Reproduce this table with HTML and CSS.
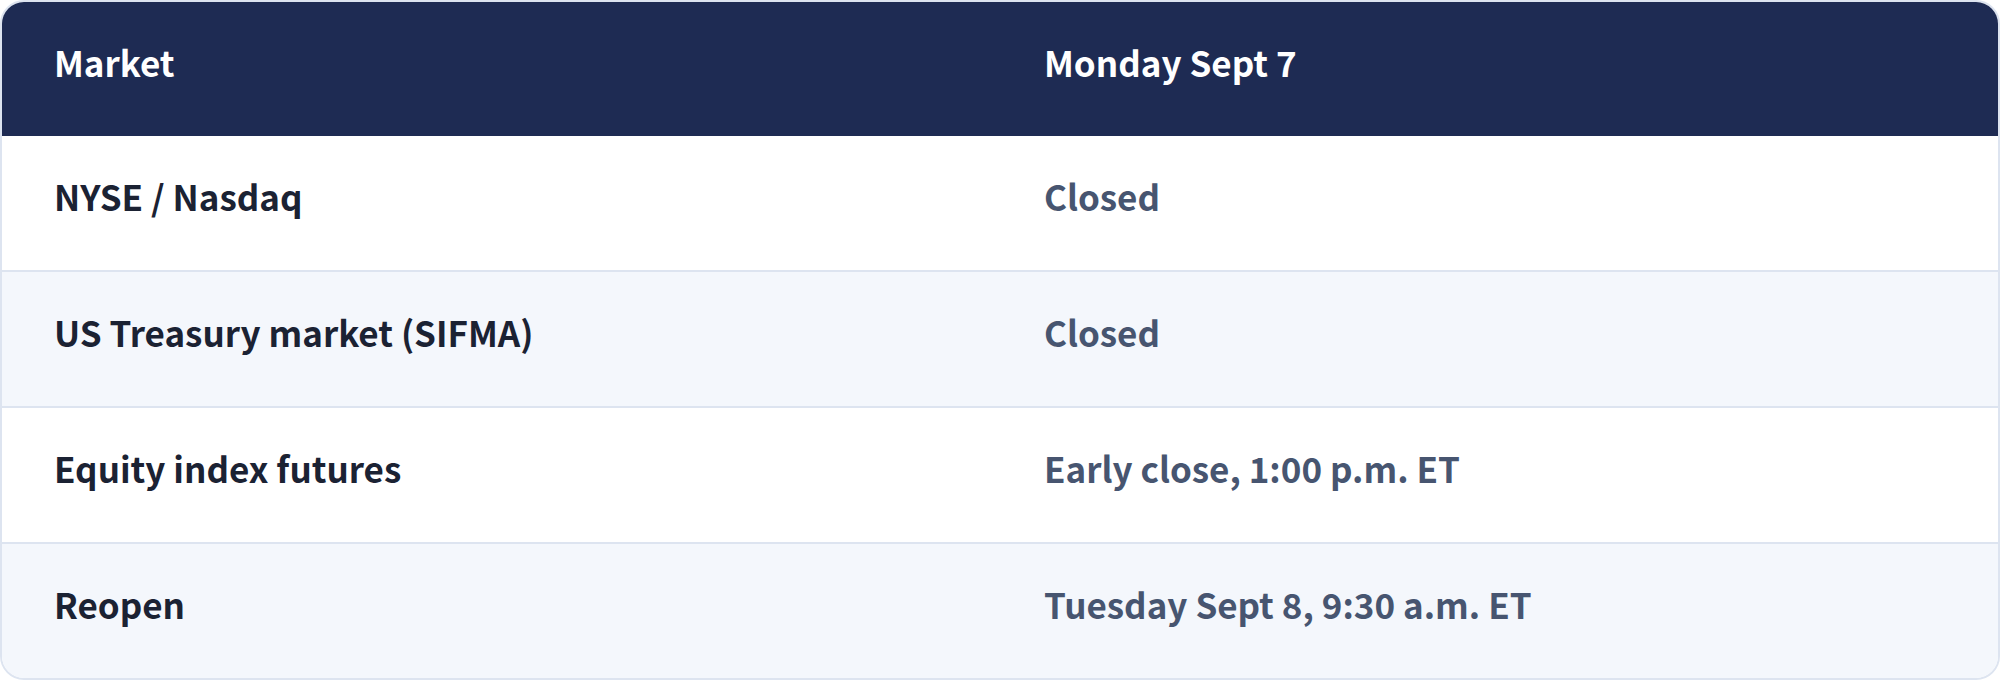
FILE: index.html
```html
<!DOCTYPE html>
<html>
<head>
<meta charset="utf-8">
<link rel="stylesheet" href="styles.css">
</head>
<body>
<div class="table">
  <div class="row head">
    <div class="cell">Market</div>
    <div class="cell">Monday Sept 7</div>
  </div>
  <div class="row">
    <div class="cell name">NYSE / Nasdaq</div>
    <div class="cell val">Closed</div>
  </div>
  <div class="row alt">
    <div class="cell name">US Treasury market (SIFMA)</div>
    <div class="cell val">Closed</div>
  </div>
  <div class="row">
    <div class="cell name">Equity index futures</div>
    <div class="cell val">Early close, 1:00 p.m. ET</div>
  </div>
  <div class="row alt">
    <div class="cell name">Reopen</div>
    <div class="cell val">Tuesday Sept 8, 9:30 a.m. ET</div>
  </div>
</div>
</body>
</html>
```
FILE: styles.css
```css
html, body {
  margin: 0;
  padding: 0;
  background: #ffffff;
}
body {
  font-family: "Noto Sans CJK KR", "Noto Sans", sans-serif;
  width: 2000px;
  height: 680px;
}
.table {
  box-sizing: border-box;
  width: 2000px;
  height: 680px;
  border: 2px solid #dde4f0;
  border-radius: 24px;
  overflow: hidden;
  display: flex;
  flex-direction: column;
}
.row {
  display: grid;
  grid-template-columns: 990px 1fr;
  height: 134px;
  align-items: center;
  background: #ffffff;
}
.row + .row {
  border-top: 2px solid #dde4f0;
}
.head {
  background: #1e2b53;
  color: #ffffff;
  font-weight: 700;
}
.head + .row {
  border-top: none;
}
.alt {
  background: #f4f7fc;
}
.cell {
  padding-left: 52px;
  padding-bottom: 14px;
  font-size: 35px;
  line-height: 1.2;
}
.name {
  color: #1b2233;
  font-weight: 600;
}
.val {
  color: #475570;
  font-weight: 600;
}
```
